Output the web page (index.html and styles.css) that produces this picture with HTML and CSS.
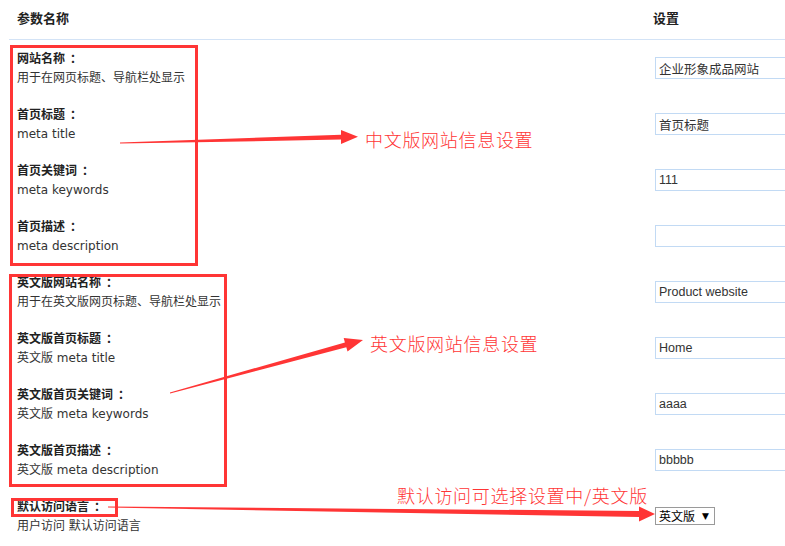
FILE: index.html
```html
<!DOCTYPE html>
<html lang="zh-CN">
<head>
    <meta charset="UTF-8">
    <meta name="viewport" content="width=device-width, initial-scale=1.0">
    <title>网站信息设置</title>
    <link rel="stylesheet" href="styles.css">
</head>
<body>
    <div class="page">
        <div class="table">
            <div class="row head">
                <div class="name">参数名称</div>
                <div class="set">设置</div>
            </div>

            <div class="row">
                <div class="name"><b>网站名称<i>：</i></b><span>用于在网页标题、导航栏处显示</span></div>
                <div class="set"><input type="text" value="企业形象成品网站"></div>
            </div>
            <div class="row">
                <div class="name"><b>首页标题<i>：</i></b><span>meta title</span></div>
                <div class="set"><input type="text" value="首页标题"></div>
            </div>
            <div class="row">
                <div class="name"><b>首页关键词<i>：</i></b><span>meta keywords</span></div>
                <div class="set"><input type="text" value="111"></div>
            </div>
            <div class="row">
                <div class="name"><b>首页描述<i>：</i></b><span>meta description</span></div>
                <div class="set"><input type="text" value=""></div>
            </div>

            <div class="row">
                <div class="name"><b>英文版网站名称<i>：</i></b><span>用于在英文版网页标题、导航栏处显示</span></div>
                <div class="set"><input type="text" value="Product website"></div>
            </div>
            <div class="row">
                <div class="name"><b>英文版首页标题<i>：</i></b><span>英文版 meta title</span></div>
                <div class="set"><input type="text" value="Home"></div>
            </div>
            <div class="row">
                <div class="name"><b>英文版首页关键词<i>：</i></b><span>英文版 meta keywords</span></div>
                <div class="set"><input type="text" value="aaaa"></div>
            </div>
            <div class="row">
                <div class="name"><b>英文版首页描述<i>：</i></b><span>英文版 meta description</span></div>
                <div class="set"><input type="text" value="bbbbb"></div>
            </div>

            <div class="row">
                <div class="name"><b>默认访问语言<i>：</i></b><span>用户访问 默认访问语言</span></div>
                <div class="set">
                    <span class="pick">
                        <select>
                            <option>中文版</option>
                            <option selected>英文版</option>
                        </select>
                    </span>
                </div>
            </div>
        </div>

        <!-- 标注：红框和箭头 -->
        <svg class="marks" width="785" height="546" viewBox="0 0 785 546">
            <g fill="none" stroke="#ff3535" stroke-width="3">
                <rect x="11.5" y="46.5" width="185" height="218"></rect>
                <rect x="10.5" y="275.5" width="215" height="210"></rect>
                <rect x="12.5" y="499.5" width="104" height="16"></rect>
            </g>
            <g fill="#ff3535">
                <polygon points="120,142.6 341,134.8 341,130 358,136.8 341,144 341,139.6 120,143.6"></polygon>
                <polygon points="169.9,392.5 344.9,342.4 343.7,338 363,340 347.5,351.6 346.3,347.2 170.1,393.5"></polygon>
                <polygon points="108,506.4 639,511 639,506.5 655,514 639,521.5 639,517 108,507.6"></polygon>
            </g>
        </svg>
        <div class="note note-cn">中文版网站信息设置</div>
        <div class="note note-en">英文版网站信息设置</div>
        <div class="note note-lang">默认访问可选择设置中/英文版</div>
    </div>
</body>
</html>
```

FILE: styles.css
```css
body {
    margin: 0;
    background: #fff;
    overflow: hidden;
    font-family: "DejaVu Sans", "Noto Sans CJK SC", sans-serif;
    font-size: 12px;
    color: #333;
}
.page {
    position: relative;
    width: 785px;
    height: 546px;
    overflow: hidden;
}
.table {
    margin-left: 9px;
    width: 900px;
}
.row {
    display: grid;
    grid-template-columns: 636px 1fr;
}
.row .name {
    padding: 8px 8px;
    line-height: 20px;
}
.row .name b,
.row .name span {
    display: block;
}
.row .name b {
    font-family: "Noto Sans CJK SC", sans-serif;
    font-weight: bold;
    color: #222;
}
/* 全角冒号居中 */
.row .name i {
    font-style: normal;
    padding-left: 5px;
}
.row .set {
    align-self: center;
    padding-left: 10px;
}
.head {
    height: 39px;
    border-bottom: 1px solid #d3e3f6;
}
.head .name,
.head .set {
    padding: 0 8px;
    line-height: 36px;
    font-family: "Noto Sans CJK SC", sans-serif;
    font-size: 13px;
    font-weight: bold;
    color: #222;
    align-self: start;
}
input {
    display: block;
    box-sizing: border-box;
    width: 200px;
    height: 22px;
    margin: 0;
    padding: 0 3px;
    border: 1px solid #c2daf4;
    font-family: "Liberation Sans", "Noto Sans CJK SC", sans-serif;
    font-size: 12.5px;
    color: #333;
    outline: none;
}
.pick {
    position: relative;
    display: inline-block;
    vertical-align: middle;
}
.pick select {
    appearance: none;
    -webkit-appearance: none;
    display: block;
    box-sizing: border-box;
    width: 60px;
    height: 18px;
    margin: 0;
    padding: 0 0 0 3px;
    border: 1px solid #9a9a9a;
    border-radius: 0;
    background: #fff;
    font-family: "Noto Sans CJK SC", sans-serif;
    font-size: 12px;
    line-height: 16px;
    color: #000;
}
.pick::after {
    content: "▼";
    position: absolute;
    right: 6px;
    top: 3px;
    font-size: 9px;
    line-height: 12px;
    color: #000;
    pointer-events: none;
}
.marks {
    position: absolute;
    left: 0;
    top: 0;
    pointer-events: none;
}
.note {
    position: absolute;
    font-family: "Noto Sans CJK SC", sans-serif;
    font-weight: 300;
    font-size: 18px;
    letter-spacing: 0.7px;
    line-height: 20px;
    color: #ff3535;
    white-space: nowrap;
}
.note-cn { left: 365px; top: 129px; }
.note-en { left: 370px; top: 333px; }
.note-lang { left: 397px; top: 485px; }
```
